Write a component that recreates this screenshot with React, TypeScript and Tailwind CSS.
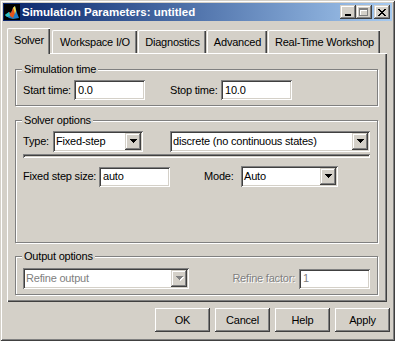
import React from 'react';

// Windows classic 3D edges
const raised = 'shadow-[inset_-1px_-1px_0_#404040,inset_1px_1px_0_#ffffff,inset_-2px_-2px_0_#808080]';
const raisedSmall = 'shadow-[inset_-1px_-1px_0_#404040,inset_1px_1px_0_#d4d0c8,inset_-2px_-2px_0_#808080,inset_2px_2px_0_#ffffff]';
const sunken = 'shadow-[inset_1px_1px_0_#808080,inset_-1px_-1px_0_#ffffff,inset_2px_2px_0_#404040,inset_-2px_-2px_0_#d4d0c8]';

const tabs = [
  { label: 'Solver', cls: 'w-[43px] h-[26px] -mb-px relative z-10 pb-[2px]', sel: true },
  { label: 'Workspace I/O', cls: 'w-[85px] h-[23px] ml-[2px]' },
  { label: 'Diagnostics', cls: 'w-[68px] h-[23px] ml-[1px]' },
  { label: 'Advanced', cls: 'w-[60px] h-[23px] ml-[1px]' },
  { label: 'Real-Time Workshop', cls: 'w-[112px] h-[23px] ml-[1px]' },
];

function Arrow({ disabled }: { disabled?: boolean }) {
  const fill = disabled ? '#808080' : '#000000';
  return (
    <svg width="8" height="5" viewBox="0 0 8 5" shapeRendering="crispEdges">
      {disabled && (
        <g fill="#ffffff">
          <rect x="1" y="1" width="7" height="1" />
          <rect x="2" y="2" width="5" height="1" />
          <rect x="3" y="3" width="3" height="1" />
          <rect x="4" y="4" width="1" height="1" />
        </g>
      )}
      <g fill={fill}>
        <rect x="0" y="0" width="7" height="1" />
        <rect x="1" y="1" width="5" height="1" />
        <rect x="2" y="2" width="3" height="1" />
        <rect x="3" y="3" width="1" height="1" />
      </g>
    </svg>
  );
}

function Field({ value, cls, disabled }: { value: string; cls: string; disabled?: boolean }) {
  return (
    <div className={`h-[20px] bg-white ${sunken} flex items-center pl-[4px] ${cls} ${disabled ? 'text-[#808080]' : ''}`}>
      {value}
    </div>
  );
}

function Combo({ value, cls, disabled }: { value: string; cls: string; disabled?: boolean }) {
  return (
    <div className={`h-[21px] bg-white ${sunken} flex items-stretch p-[2px] ${cls}`}>
      <div className={`flex-1 flex items-center pl-[1px] ${disabled ? 'text-[#808080]' : ''}`}>{value}</div>
      <div className={`w-[16px] bg-[#d4d0c8] ${raisedSmall} flex items-center justify-center pl-[1px]`}>
        <Arrow disabled={disabled} />
      </div>
    </div>
  );
}

function Group({ title, cls, children }: { title: string; cls: string; children: React.ReactNode }) {
  return (
    <fieldset className={`border border-[#808080] shadow-[inset_1px_1px_0_#ffffff,1px_1px_0_#ffffff] w-[363px] min-w-0 ${cls}`}>
      <legend className="ml-[6px] px-[2px] leading-[13px] bg-[#d4d0c8]">{title}</legend>
      {children}
    </fieldset>
  );
}

function Logo() {
  return (
    <svg width="16" height="16" viewBox="0 0 16 16">
      <rect width="16" height="16" fill="#000" />
      <path d="M1 11 L5 8 L7 9 L9 4 L11 2 L13 9 L15 14 L9 15 L5 14 Z" fill="#1e7fc8" />
      <path d="M5 8 L7 9 L9 4 L10 3 L11 9 L9 14 L6 12 Z" fill="#e8571a" />
      <path d="M9 4 L11 2 L12 7 L11 10 L10 6 Z" fill="#f7e04a" />
      <path d="M1 11 L5 8 L6 12 L3 13 Z" fill="#2fc4c0" />
    </svg>
  );
}

function TitleButton({ children }: { children: React.ReactNode }) {
  return (
    <div className={`w-[16px] h-[14px] bg-[#d4d0c8] ${raisedSmall} flex items-center justify-center`}>{children}</div>
  );
}

export default function App() {
  return (
    <div className="w-[395px] h-[341px] bg-[#d4d0c8] p-[3px] flex flex-col text-[11px] leading-[13px] tracking-[-0.2px] text-black whitespace-nowrap font-['Liberation_Sans',Arial,sans-serif] shadow-[inset_1px_1px_0_#d4d0c8,inset_-1px_-1px_0_#404040,inset_2px_2px_0_#ffffff,inset_-2px_-2px_0_#808080]">
      {/* title bar */}
      <div className="h-[18px] flex items-center pl-[1px] pr-[2px] bg-gradient-to-r from-[#0a246a] to-[#a6caf0]">
        <Logo />
        <span className="ml-[2px] text-white font-bold text-[11.5px] tracking-normal">Simulation Parameters: untitled</span>
        <div className="ml-auto flex items-center">
          <TitleButton>
            <svg width="8" height="7" shapeRendering="crispEdges">
              <rect x="1" y="5" width="6" height="2" fill="#000" />
            </svg>
          </TitleButton>
          <TitleButton>
            <svg width="10" height="9" shapeRendering="crispEdges">
              <path d="M1 1h8v7h-8z M2 3v4h6v-4z" fill="#ffffff" fillRule="evenodd" />
              <path d="M0 0h9v8h-9z M1 2v5h7v-5z" fill="#808080" fillRule="evenodd" />
            </svg>
          </TitleButton>
          <div className="ml-[2px]">
            <TitleButton>
              <svg width="8" height="7" shapeRendering="crispEdges" fill="#000">
                <rect x="0" y="0" width="2" height="1" /><rect x="6" y="0" width="2" height="1" />
                <rect x="1" y="1" width="2" height="1" /><rect x="5" y="1" width="2" height="1" />
                <rect x="2" y="2" width="4" height="1" />
                <rect x="3" y="3" width="2" height="1" />
                <rect x="2" y="4" width="4" height="1" />
                <rect x="1" y="5" width="2" height="1" /><rect x="5" y="5" width="2" height="1" />
                <rect x="0" y="6" width="2" height="1" /><rect x="6" y="6" width="2" height="1" />
              </svg>
            </TitleButton>
          </div>
        </div>
      </div>

      <div className="pl-[4px] pr-[5px] mt-[7px]">
        {/* tabs */}
        <div className="flex items-end h-[25px]">
          {tabs.map((t) => (
            <div
              key={t.label}
              className={`${t.cls} bg-[#d4d0c8] border-t border-l border-white rounded-tl-[2px] shadow-[inset_-1px_0_0_#404040,inset_-2px_0_0_#808080] flex items-center justify-center`}
            >
              {t.label}
            </div>
          ))}
        </div>

        {/* tab page */}
        <div className="h-[249px] shadow-[inset_1px_1px_0_#ffffff,inset_-1px_-1px_0_#404040,inset_-2px_-2px_0_#808080] pl-[8px] pt-[10px]">
          <Group title="Simulation time" cls="pb-[5px]">
            <div className="flex items-center pl-[7px] pt-[4px]">
              <div className="w-[51px]">Start time:</div>
              <Field value="0.0" cls="w-[71px]" />
              <div className="w-[76px] pl-[25px]">Stop time:</div>
              <Field value="10.0" cls="w-[71px]" />
            </div>
          </Group>

          <Group title="Solver options" cls="mt-[8px] h-[129px]">
            <div className="pl-[7px] pt-[4px]">
              <div className="flex items-center">
                <div className="w-[30px]">Type:</div>
                <Combo value="Fixed-step" cls="w-[90px]" />
                <Combo value="discrete (no continuous states)" cls="w-[200px] ml-[27px]" />
              </div>
              <div className={`h-[4px] w-[347px] mt-[2px] ${sunken}`} />
              <div className="flex items-center mt-[8px]">
                <div className="w-[76px]">Fixed step size:</div>
                <Field value="auto" cls="w-[71px]" />
                <div className="w-[71px] pl-[34px]">Mode:</div>
                <Combo value="Auto" cls="w-[97px]" />
              </div>
            </div>
          </Group>

          <Group title="Output options" cls="mt-[7px] pb-[5px]">
            <div className="flex items-center pl-[7px] pt-[5px]">
              <Combo value="Refine output" cls="w-[166px]" disabled />
              <div className="w-[110px] pr-[4px] text-right text-[#808080] [text-shadow:1px_1px_0_#ffffff]">Refine factor:</div>
              <Field value="1" cls="w-[71px]" disabled />
            </div>
          </Group>
        </div>
      </div>

      {/* buttons */}
      <div className="flex justify-end gap-[5px] mt-[6px] pr-[2px]">
        {['OK', 'Cancel', 'Help', 'Apply'].map((b) => (
          <div key={b} className={`w-[55px] h-[24px] bg-[#d4d0c8] ${raised} flex items-center justify-center`}>
            {b}
          </div>
        ))}
      </div>
    </div>
  );
}
